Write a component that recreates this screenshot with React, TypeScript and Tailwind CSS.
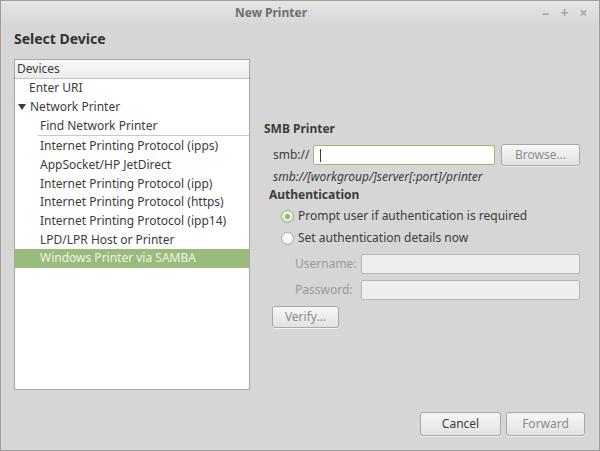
const children = [
  "Internet Printing Protocol (ipps)",
  "AppSocket/HP JetDirect",
  "Internet Printing Protocol (ipp)",
  "Internet Printing Protocol (https)",
  "Internet Printing Protocol (ipp14)",
  "LPD/LPR Host or Printer",
];

function Btn({
  label,
  disabled,
  className,
}: {
  label: string;
  disabled?: boolean;
  className: string;
}) {
  return (
    <div
      className={`flex items-center justify-center rounded-[3px] border border-[#a8a8a8] bg-gradient-to-b from-[#f7f7f7] to-[#e2e2e2] shadow-[0_1px_0_rgba(255,255,255,0.6)] ${
        disabled ? "text-[#8c8c8c]" : "text-[#3c3c3c]"
      } ${className}`}
    >
      {label}
    </div>
  );
}

function Radio({ checked }: { checked?: boolean }) {
  return (
    <div
      className={`flex h-[13px] w-[13px] shrink-0 items-center justify-center rounded-full border ${
        checked
          ? "border-[#8fb272] bg-gradient-to-b from-[#f2f7ec] to-[#dce8d0]"
          : "border-[#a8a8a8] bg-gradient-to-b from-white to-[#ececec]"
      }`}
    >
      {checked && <div className="h-[5px] w-[5px] rounded-full bg-[#8fb86a]" />}
    </div>
  );
}

export default function App() {
  return (
    <div className="flex h-[451px] w-[600px] flex-col overflow-hidden border border-[#9c9c9c] bg-[#d6d6d6] font-['Noto_Sans',sans-serif] text-[12px] text-[#3c3c3c]">
      {/* title bar */}
      <div className="relative flex h-[24px] shrink-0 items-center bg-gradient-to-b from-[#e6e6e6] to-[#d6d6d6]">
        <div className="w-full pr-[58px] text-center text-[12px] font-bold text-[#6e6e6e]">
          New Printer
        </div>
        <div className="absolute right-[6px] top-[3px] flex text-[14px] font-bold leading-[18px] text-[#a8a8a8]">
          <span className="w-[19px] text-center">–</span>
          <span className="w-[19px] text-center">+</span>
          <span className="w-[19px] text-center">×</span>
        </div>
      </div>

      <div className="flex flex-1 flex-col pl-[13px] pr-[14px]">
        <div className="pt-[5px] text-[14px] font-bold leading-[18px] text-[#333333]">
          Select Device
        </div>

        <div className="mt-[11px] flex">
          {/* device tree */}
          <div className="flex h-[331px] w-[236px] shrink-0 flex-col border border-[#a6a6a6] bg-white">
            <div className="flex h-[19px] items-center border-b border-[#c4c4c4] bg-gradient-to-b from-[#f8f8f8] to-[#ececec] pl-[2px]">
              Devices
            </div>
            <div className="flex h-[18.67px] items-center pl-[14px]">Enter URI</div>
            <div className="flex h-[18.67px] items-center pl-[3px]">
              <svg width="8" height="6" viewBox="0 0 8 6" className="mr-[4px]">
                <path d="M0 0 H8 L4 6 Z" fill="#3c3c3c" />
              </svg>
              Network Printer
            </div>
            <div className="flex h-[18.67px] items-center pl-[25px]">
              Find Network Printer
            </div>
            <div className="ml-[23px] h-[2px] border-t border-[#c8c8c8]" />
            {children.map((c) => (
              <div key={c} className="flex h-[18.67px] items-center pl-[25px]">
                {c}
              </div>
            ))}
            <div className="flex h-[18.67px] items-center bg-[#9bbb7d] pl-[25px] text-[#eef3e8]">
              Windows Printer via SAMBA
            </div>
          </div>

          {/* SMB panel */}
          <div className="flex flex-1 flex-col pl-[14px] pt-[62px]">
            <div className="font-bold leading-[16px]">SMB Printer</div>
            <div className="mt-[7px] flex items-center pl-[9px]">
              <span className="w-[40px]">smb://</span>
              <div className="flex h-[20px] w-[182px] items-center rounded-[2px] border border-[#94bb74] bg-white pl-[6px]">
                <div className="h-[13px] w-px bg-[#3c3c3c]" />
              </div>
              <Btn label="Browse..." disabled className="ml-[6px] h-[22px] w-[79px]" />
            </div>
            <div className="mt-[3px] pl-[9px] italic leading-[16px]">
              smb://[workgroup/]server[:port]/printer
            </div>
            <div className="mt-[2px] pl-[5px] font-bold leading-[16px]">
              Authentication
            </div>
            <div className="mt-[5px] flex items-center pl-[17px] leading-[16px]">
              <Radio checked />
              <span className="ml-[4px]">Prompt user if authentication is required</span>
            </div>
            <div className="mt-[6px] flex items-center pl-[17px] leading-[16px]">
              <Radio />
              <span className="ml-[4px]">Set authentication details now</span>
            </div>
            <div className="mt-[8px] flex items-center pl-[31px] text-[#999999]">
              <span className="w-[66px]">Username:</span>
              <div className="h-[20px] w-[219px] rounded-[2px] border border-[#b4b4b4] bg-[#eeeeee]" />
            </div>
            <div className="mt-[6px] flex items-center pl-[31px] text-[#999999]">
              <span className="w-[66px]">Password:</span>
              <div className="h-[20px] w-[219px] rounded-[2px] border border-[#b4b4b4] bg-[#eeeeee]" />
            </div>
            <Btn label="Verify..." disabled className="ml-[8px] mt-[6px] h-[22px] w-[67px]" />
          </div>
        </div>

        <div className="mt-[22px] flex justify-end gap-[5px]">
          <Btn label="Cancel" className="h-[24px] w-[81px]" />
          <Btn label="Forward" disabled className="h-[24px] w-[79px]" />
        </div>
      </div>
    </div>
  );
}
